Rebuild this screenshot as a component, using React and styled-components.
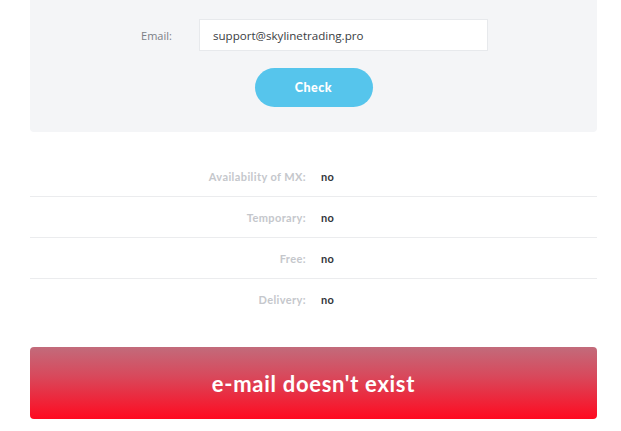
import styled, { createGlobalStyle } from "styled-components";

const GlobalStyle = createGlobalStyle`
  body {
    margin: 0;
    background: #ffffff;
    font-family: "Lato", "Open Sans", sans-serif;
  }
`;

const Page = styled.div`
  width: 567px;
  margin-left: 30px;
`;

const Panel = styled.div`
  background-color: #f4f5f7;
  border-radius: 0 0 4px 4px;
  padding: 19px 0 25px;
  display: flex;
  flex-direction: column;
  align-items: center;
  gap: 17px;
`;

const FormRow = styled.div`
  display: flex;
  align-items: center;
  gap: 27px;
  margin-left: 2px;
`;

const Label = styled.label`
  font-family: "Open Sans", sans-serif;
  font-size: 11px;
  color: #7b7f86;
`;

const Input = styled.div`
  width: 274px;
  height: 30px;
  padding-left: 13px;
  background: #ffffff;
  border: 1px solid #e7e9ec;
  display: flex;
  align-items: center;
  font-family: "Open Sans", sans-serif;
  font-size: 11.6px;
  color: #3a3d42;
`;

const CheckButton = styled.button`
  width: 118px;
  height: 39px;
  border: none;
  border-radius: 20px;
  background-color: #56c5ec;
  color: #ffffff;
  font-family: "Lato", sans-serif;
  font-weight: 900;
  font-size: 12.5px;
  letter-spacing: 0.5px;
  cursor: pointer;
`;

const Results = styled.div`
  margin-top: 24px;
`;

const Row = styled.div`
  display: grid;
  grid-template-columns: 276px 1fr;
  column-gap: 15px;
  align-items: center;
  height: 40px;
  border-top: ${(props) => (props.first ? "none" : "1px solid #ebecee")};
`;

const Key = styled.span`
  text-align: right;
  font-weight: 700;
  font-size: 11px;
  letter-spacing: 0.4px;
  color: #c5c7cc;
`;

const Value = styled.span`
  font-weight: 700;
  font-size: 11px;
  letter-spacing: 0.4px;
  color: #33363b;
`;

const Banner = styled.div`
  margin-top: 28px;
  height: 72px;
  border-radius: 4px;
  background: linear-gradient(180deg, #c26b7b 0%, #d8495c 40%, #ff0a20 100%);
  display: flex;
  align-items: center;
  justify-content: center;
  color: #ffffff;
  font-family: "Lato", sans-serif;
  font-weight: 700;
  font-size: 22px;
  letter-spacing: 0.7px;
`;

const rows = [
  ["Availability of MX:", "no"],
  ["Temporary:", "no"],
  ["Free:", "no"],
  ["Delivery:", "no"],
];

export default function App() {
  return (
    <>
      <GlobalStyle />
      <Page>
        <Panel>
          <FormRow>
            <Label>Email:</Label>
            <Input>support@skylinetrading.pro</Input>
          </FormRow>
          <CheckButton>Check</CheckButton>
        </Panel>
        <Results>
          {rows.map(([k, v], i) => (
            <Row key={k} first={i === 0}>
              <Key>{k}</Key>
              <Value>{v}</Value>
            </Row>
          ))}
        </Results>
        <Banner>e-mail doesn't exist</Banner>
      </Page>
    </>
  );
}
